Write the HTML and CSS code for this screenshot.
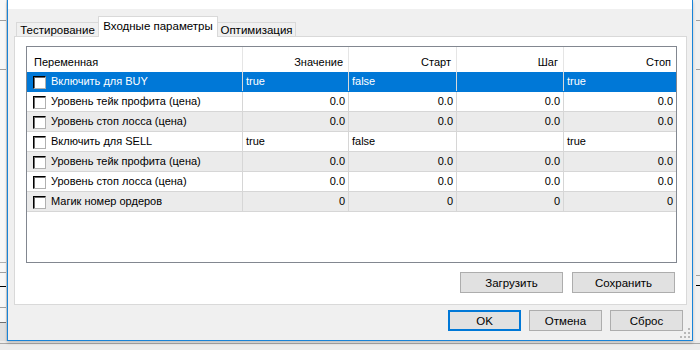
FILE: index.html
```html
<!DOCTYPE html>
<html lang="ru">
<head>
    <meta charset="UTF-8">
    <meta name="viewport" content="width=device-width, initial-scale=1.0">
    <title>Свойства эксперта</title>
    <link rel="stylesheet" href="styles.css">
</head>
<body>
    <div class="desk">
        <div class="side side-left"></div>

        <div class="dialog">
            <div class="title-edge"></div>

            <div class="dialog-body">
                <div class="tabs">
                    <div class="tab tab-first">Тестирование</div>
                    <div class="tab tab-active">Входные параметры</div>
                    <div class="tab tab-last">Оптимизация</div>
                </div>

                <div class="panel">
                    <div class="grid">
                        <div class="grid-head">
                            <div class="hcell left">Переменная</div>
                            <div class="hcell">Значение</div>
                            <div class="hcell">Старт</div>
                            <div class="hcell">Шаг</div>
                            <div class="hcell">Стоп</div>
                        </div>

                        <div class="rows">
                            <div class="row selected">
                                <div class="cell name"><span class="check"></span>Включить для BUY</div>
                                <div class="cell">true</div>
                                <div class="cell">false</div>
                                <div class="cell"></div>
                                <div class="cell">true</div>
                            </div>
                            <div class="row">
                                <div class="cell name"><span class="check"></span>Уровень тейк профита (цена)</div>
                                <div class="cell num">0.0</div>
                                <div class="cell num">0.0</div>
                                <div class="cell num">0.0</div>
                                <div class="cell num">0.0</div>
                            </div>
                            <div class="row">
                                <div class="cell name"><span class="check"></span>Уровень стоп лосса (цена)</div>
                                <div class="cell num">0.0</div>
                                <div class="cell num">0.0</div>
                                <div class="cell num">0.0</div>
                                <div class="cell num">0.0</div>
                            </div>
                            <div class="row">
                                <div class="cell name"><span class="check"></span>Включить для SELL</div>
                                <div class="cell">true</div>
                                <div class="cell">false</div>
                                <div class="cell"></div>
                                <div class="cell">true</div>
                            </div>
                            <div class="row">
                                <div class="cell name"><span class="check"></span>Уровень тейк профита (цена)</div>
                                <div class="cell num">0.0</div>
                                <div class="cell num">0.0</div>
                                <div class="cell num">0.0</div>
                                <div class="cell num">0.0</div>
                            </div>
                            <div class="row">
                                <div class="cell name"><span class="check"></span>Уровень стоп лосса (цена)</div>
                                <div class="cell num">0.0</div>
                                <div class="cell num">0.0</div>
                                <div class="cell num">0.0</div>
                                <div class="cell num">0.0</div>
                            </div>
                            <div class="row">
                                <div class="cell name"><span class="check"></span>Магик номер ордеров</div>
                                <div class="cell num">0</div>
                                <div class="cell num">0</div>
                                <div class="cell num">0</div>
                                <div class="cell num">0</div>
                            </div>
                        </div>
                    </div>

                    <div class="panel-buttons">
                        <button class="btn btn-wide">Загрузить</button>
                        <button class="btn btn-wide">Сохранить</button>
                    </div>
                </div>

                <div class="dialog-buttons">
                    <button class="btn btn-default">OK</button>
                    <button class="btn">Отмена</button>
                    <button class="btn">Сброс</button>
                </div>
            </div>

            <svg class="grip" width="12" height="12" viewBox="0 0 12 12">
                <rect x="9" y="1" width="2" height="2" fill="#b8b8b8"/>
                <rect x="9" y="5" width="2" height="2" fill="#b8b8b8"/>
                <rect x="5" y="5" width="2" height="2" fill="#b8b8b8"/>
                <rect x="9" y="9" width="2" height="2" fill="#b8b8b8"/>
                <rect x="5" y="9" width="2" height="2" fill="#b8b8b8"/>
                <rect x="1" y="9" width="2" height="2" fill="#b8b8b8"/>
            </svg>
        </div>

        <div class="side side-right"></div>
    </div>
</body>
</html>
```

FILE: styles.css
```css
body {
  margin: 0;
  font-family: 'Liberation Sans', Arial, sans-serif;
  font-size: 11px;
  color: #000;
  background:
    linear-gradient(to bottom, transparent 343px, #a8a8a8 343px, #a8a8a8 344px, transparent 344px),
    #ececec;
}

.desk {
  display: flex;
  width: 700px;
  height: 350px;
  overflow: hidden;
}

.side {
  width: 7px;
  flex: none;
  height: 341px;
}

.side-left {
  background:
    linear-gradient(to bottom,
      transparent 20px, #a0a0a0 20px, #a0a0a0 21px, transparent 21px,
      transparent 69px, #a0a0a0 69px, #a0a0a0 70px, transparent 70px,
      transparent 262px, #b0b0b0 262px, #b0b0b0 263px, transparent 263px,
      transparent 272px, #a0a0a0 272px, #a0a0a0 273px, transparent 273px,
      transparent 286px, #000 286px, #000 287px, transparent 287px,
      transparent 307px, #a0a0a0 307px, #a0a0a0 308px, transparent 308px,
      transparent 322px, #707070 322px, #707070 323px, #e0e0e0 323px),
    #f7f7f7;
  border-right: 1px solid #d0d0d0;
  width: 6px;
}

.side-right {
  background:
    linear-gradient(to bottom,
      transparent 20px, #a0a0a0 20px, #a0a0a0 21px, transparent 21px,
      transparent 69px, #a0a0a0 69px, #a0a0a0 70px, transparent 70px,
      transparent 275px, #a0a0a0 275px, #a0a0a0 276px, transparent 276px,
      transparent 285px, #000 285px, #000 286px, transparent 286px),
    #f0f0f0;
  background-size: 4px 100%;
  background-repeat: no-repeat;
  background-position: right top;
}

.dialog {
  position: relative;
  width: 686px;
  height: 341px;
  flex: none;
  box-sizing: border-box;
  border: 1px solid #1883d7;
  border-top: none;
  background: #f0f0f0;
  box-shadow: 0 2px 3px rgba(0, 0, 0, 0.2);
  display: flex;
  flex-direction: column;
}

.title-edge {
  height: 9px;
  background: #fff;
}

.dialog-body {
  flex: 1;
  padding: 7px 5px 0 6px;
}

/* tab strip */
.tabs {
  display: flex;
  align-items: flex-end;
  height: 20px;
  padding-left: 2px;
}

.tab {
  box-sizing: border-box;
  height: 14px;
  line-height: 14px;
  font-size: 11.5px;
  text-align: center;
  border: 1px solid #d9d9d9;
  border-bottom: none;
  background: #f0f0f0;
  white-space: nowrap;
}

.tab-first {
  width: 82px;
  border-right: none;
}

.tab-last {
  width: 78px;
  border-left: none;
}

.tab-active {
  position: relative;
  z-index: 1;
  width: 120px;
  height: 21px;
  margin-bottom: -1px;
  padding-top: 2px;
  line-height: 15px;
  background: #fff;
}

.panel {
  height: 269px;
  box-sizing: border-box;
  border: 1px solid #d9d9d9;
  background: #fff;
  padding: 9px 9px 11px 11px;
}

/* parameters list */
.grid {
  height: 217px;
  box-sizing: border-box;
  border: 1px solid #828790;
}

.grid-head,
.row {
  display: grid;
  grid-template-columns: 216px 106px 108px 107px 112px;
}

.grid-head {
  height: 25px;
}

.hcell {
  box-sizing: border-box;
  border-right: 1px solid #e5e5e5;
  text-align: right;
  padding: 0 5px;
  line-height: 30px;
}

.hcell.left {
  text-align: left;
  padding-left: 7px;
}

.row {
  height: 20px;
  box-sizing: border-box;
  border-bottom: 1px solid #d6d6d6;
  background: #fff;
}

.row:nth-child(odd) {
  background: #ebebeb;
}

.row.selected {
  background: #0078d7;
  color: #fff;
  border-bottom-color: #0078d7;
}

.cell {
  box-sizing: border-box;
  border-right: 1px solid #d6d6d6;
  padding: 0 3px;
  line-height: 19px;
  white-space: nowrap;
  overflow: hidden;
}

.cell:last-child,
.hcell:last-child {
  border-right: none;
}

.row.selected .cell {
  border-right-color: #d9d9d9;
}

.cell.num {
  text-align: right;
}

.cell.name {
  display: flex;
  align-items: flex-start;
  padding-left: 6px;
}

.check {
  width: 13px;
  height: 13px;
  margin: 4px 5px 0 0;
  flex: none;
  box-sizing: border-box;
  background: #fff;
  border: 1px solid;
  border-color: #000 #b0b0b0 #b0b0b0 #000;
  box-shadow: inset 1px 1px 0 #6a6a6a;
}

/* buttons */
.panel-buttons {
  display: flex;
  justify-content: flex-end;
  gap: 9px;
  margin-top: 9px;
  padding-right: 2px;
}

.dialog-buttons {
  display: flex;
  justify-content: flex-end;
  gap: 8px;
  padding: 5px 4px 0 0;
}

.btn {
  width: 73px;
  height: 21px;
  box-sizing: border-box;
  padding: 0;
  border: 1px solid #adadad;
  background: #e1e1e1;
  font-family: inherit;
  font-size: 11.5px;
  color: #000;
}

.btn-wide {
  width: 103px;
}

.btn-default {
  border: 2px solid #0078d7;
}

.grip {
  position: absolute;
  right: 1px;
  bottom: 1px;
}
```
